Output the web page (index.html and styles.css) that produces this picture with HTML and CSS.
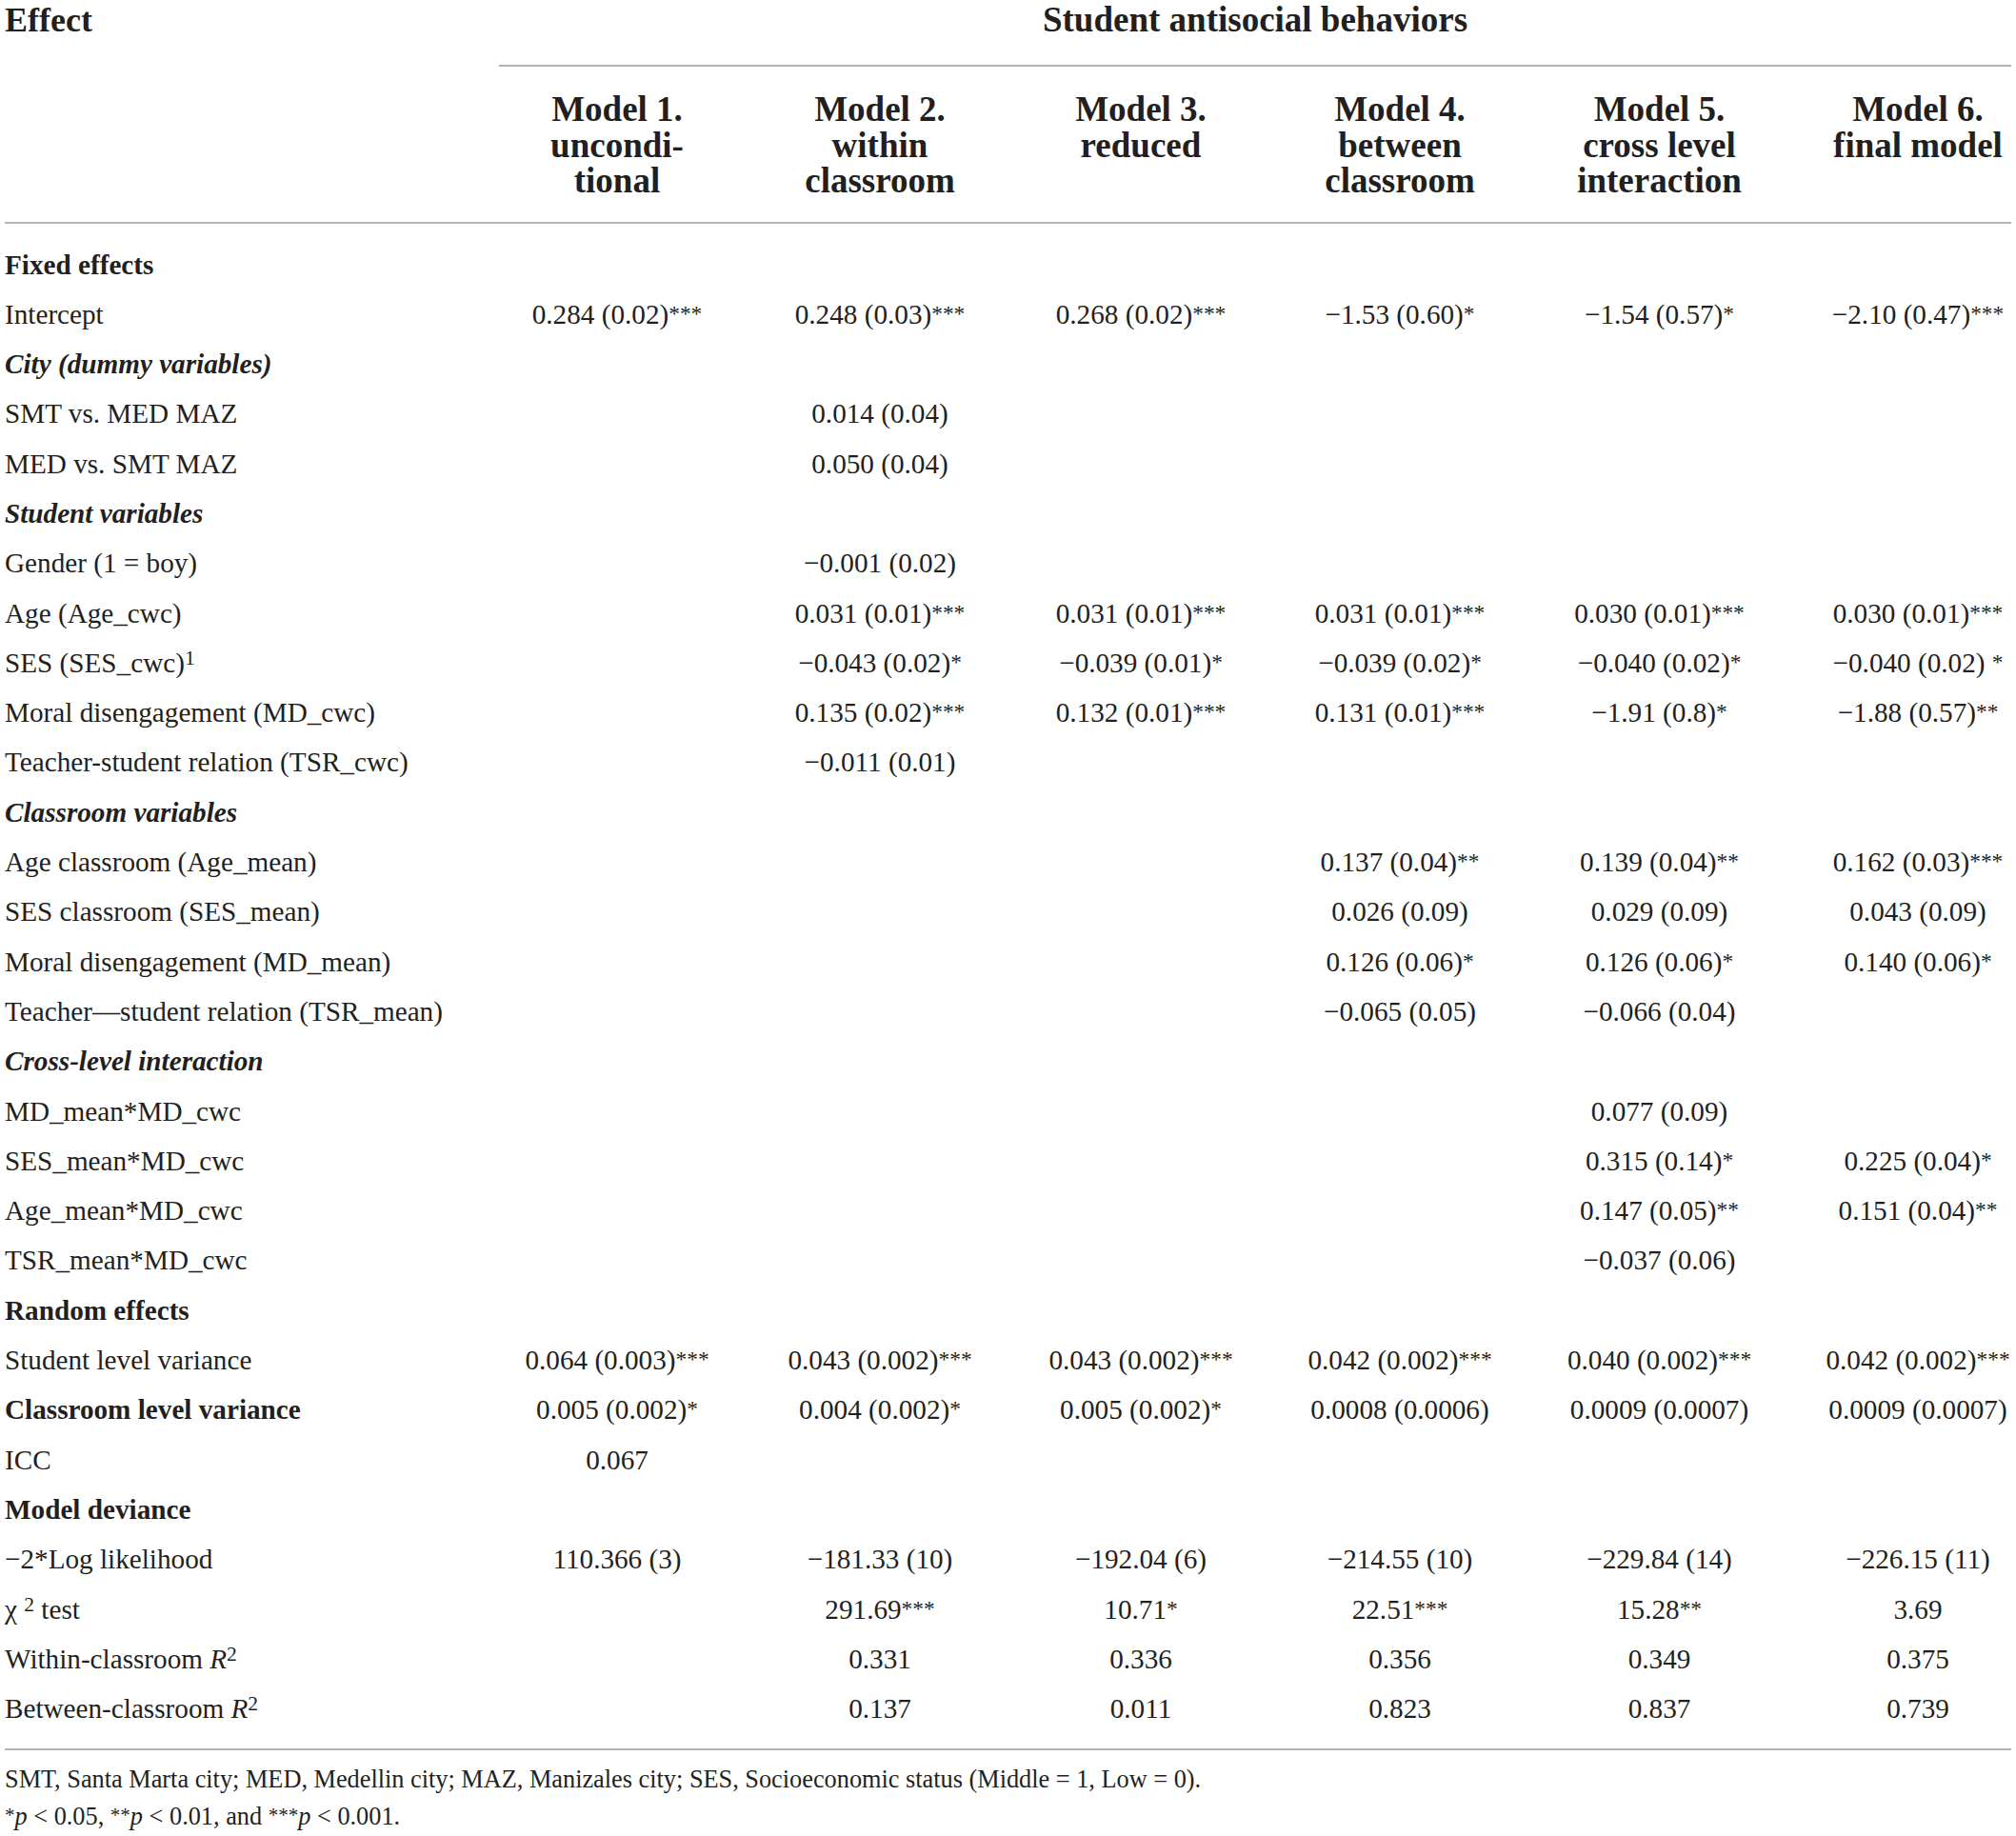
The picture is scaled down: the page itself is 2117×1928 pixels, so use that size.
FILE: index.html
```html
<!DOCTYPE html>
<html lang="en">

<head>
    <meta charset="UTF-8">
    <title>Student antisocial behaviors – multilevel models</title>
    <link rel="stylesheet" href="styles.css">
</head>

<body>
    <div class="page">
        <table class="models">
            <colgroup>
                <col class="col-label">
                <col class="col-m1">
                <col class="col-m2">
                <col class="col-m3">
                <col class="col-m4">
                <col class="col-m5">
                <col class="col-last">
            </colgroup>
            <thead>
                <tr class="head-top">
                    <th class="effect">Effect</th>
                    <th colspan="6" class="span-head">
                        <div class="span-title">Student antisocial behaviors</div>
                    </th>
                </tr>
                <tr class="head-models">
                    <th></th>
                    <th>Model 1.<br>uncondi-<br>tional</th>
                    <th>Model 2.<br>within<br>classroom</th>
                    <th>Model 3.<br>reduced</th>
                    <th>Model 4.<br>between<br>classroom</th>
                    <th>Model 5.<br>cross level<br>interaction</th>
                    <th class="last">Model 6.<br>final model</th>
                </tr>
            </thead>
            <tbody>
                <tr class="first">
                    <td class="group">Fixed effects</td>
                    <td></td><td></td><td></td><td></td><td></td><td class="last"></td>
                </tr>
                <tr>
                    <td>Intercept</td>
                    <td>0.284 (0.02)<span class="sig">***</span></td>
                    <td>0.248 (0.03)<span class="sig">***</span></td>
                    <td>0.268 (0.02)<span class="sig">***</span></td>
                    <td>&minus;1.53 (0.60)<span class="sig">*</span></td>
                    <td>&minus;1.54 (0.57)<span class="sig">*</span></td>
                    <td class="last">&minus;2.10 (0.47)<span class="sig">***</span></td>
                </tr>
                <tr>
                    <td class="group italic">City (dummy variables)</td>
                    <td></td><td></td><td></td><td></td><td></td><td class="last"></td>
                </tr>
                <tr>
                    <td>SMT vs. MED MAZ</td>
                    <td></td>
                    <td>0.014 (0.04)</td>
                    <td></td><td></td><td></td><td class="last"></td>
                </tr>
                <tr>
                    <td>MED vs. SMT MAZ</td>
                    <td></td>
                    <td>0.050 (0.04)</td>
                    <td></td><td></td><td></td><td class="last"></td>
                </tr>
                <tr>
                    <td class="group italic">Student variables</td>
                    <td></td><td></td><td></td><td></td><td></td><td class="last"></td>
                </tr>
                <tr>
                    <td>Gender (1 = boy)</td>
                    <td></td>
                    <td>&minus;0.001 (0.02)</td>
                    <td></td><td></td><td></td><td class="last"></td>
                </tr>
                <tr>
                    <td>Age (Age_cwc)</td>
                    <td></td>
                    <td>0.031 (0.01)<span class="sig">***</span></td>
                    <td>0.031 (0.01)<span class="sig">***</span></td>
                    <td>0.031 (0.01)<span class="sig">***</span></td>
                    <td>0.030 (0.01)<span class="sig">***</span></td>
                    <td class="last">0.030 (0.01)<span class="sig">***</span></td>
                </tr>
                <tr>
                    <td>SES (SES_cwc)<sup>1</sup></td>
                    <td></td>
                    <td>&minus;0.043 (0.02)<span class="sig">*</span></td>
                    <td>&minus;0.039 (0.01)<span class="sig">*</span></td>
                    <td>&minus;0.039 (0.02)<span class="sig">*</span></td>
                    <td>&minus;0.040 (0.02)<span class="sig">*</span></td>
                    <td class="last">&minus;0.040 (0.02) <span class="sig">*</span></td>
                </tr>
                <tr>
                    <td>Moral disengagement (MD_cwc)</td>
                    <td></td>
                    <td>0.135 (0.02)<span class="sig">***</span></td>
                    <td>0.132 (0.01)<span class="sig">***</span></td>
                    <td>0.131 (0.01)<span class="sig">***</span></td>
                    <td>&minus;1.91 (0.8)<span class="sig">*</span></td>
                    <td class="last">&minus;1.88 (0.57)<span class="sig">**</span></td>
                </tr>
                <tr>
                    <td>Teacher-student relation (TSR_cwc)</td>
                    <td></td>
                    <td>&minus;0.011 (0.01)</td>
                    <td></td><td></td><td></td><td class="last"></td>
                </tr>
                <tr>
                    <td class="group italic">Classroom variables</td>
                    <td></td><td></td><td></td><td></td><td></td><td class="last"></td>
                </tr>
                <tr>
                    <td>Age classroom (Age_mean)</td>
                    <td></td><td></td><td></td>
                    <td>0.137 (0.04)<span class="sig">**</span></td>
                    <td>0.139 (0.04)<span class="sig">**</span></td>
                    <td class="last">0.162 (0.03)<span class="sig">***</span></td>
                </tr>
                <tr>
                    <td>SES classroom (SES_mean)</td>
                    <td></td><td></td><td></td>
                    <td>0.026 (0.09)</td>
                    <td>0.029 (0.09)</td>
                    <td class="last">0.043 (0.09)</td>
                </tr>
                <tr>
                    <td>Moral disengagement (MD_mean)</td>
                    <td></td><td></td><td></td>
                    <td>0.126 (0.06)<span class="sig">*</span></td>
                    <td>0.126 (0.06)<span class="sig">*</span></td>
                    <td class="last">0.140 (0.06)<span class="sig">*</span></td>
                </tr>
                <tr>
                    <td>Teacher&mdash;student relation (TSR_mean)</td>
                    <td></td><td></td><td></td>
                    <td>&minus;0.065 (0.05)</td>
                    <td>&minus;0.066 (0.04)</td>
                    <td class="last"></td>
                </tr>
                <tr>
                    <td class="group italic">Cross-level interaction</td>
                    <td></td><td></td><td></td><td></td><td></td><td class="last"></td>
                </tr>
                <tr>
                    <td>MD_mean<span class="star">*</span>MD_cwc</td>
                    <td></td><td></td><td></td><td></td>
                    <td>0.077 (0.09)</td>
                    <td class="last"></td>
                </tr>
                <tr>
                    <td>SES_mean<span class="star">*</span>MD_cwc</td>
                    <td></td><td></td><td></td><td></td>
                    <td>0.315 (0.14)<span class="sig">*</span></td>
                    <td class="last">0.225 (0.04)<span class="sig">*</span></td>
                </tr>
                <tr>
                    <td>Age_mean<span class="star">*</span>MD_cwc</td>
                    <td></td><td></td><td></td><td></td>
                    <td>0.147 (0.05)<span class="sig">**</span></td>
                    <td class="last">0.151 (0.04)<span class="sig">**</span></td>
                </tr>
                <tr>
                    <td>TSR_mean<span class="star">*</span>MD_cwc</td>
                    <td></td><td></td><td></td><td></td>
                    <td>&minus;0.037 (0.06)</td>
                    <td class="last"></td>
                </tr>
                <tr>
                    <td class="group">Random effects</td>
                    <td></td><td></td><td></td><td></td><td></td><td class="last"></td>
                </tr>
                <tr>
                    <td>Student level variance</td>
                    <td>0.064 (0.003)<span class="sig">***</span></td>
                    <td>0.043 (0.002)<span class="sig">***</span></td>
                    <td>0.043 (0.002)<span class="sig">***</span></td>
                    <td>0.042 (0.002)<span class="sig">***</span></td>
                    <td>0.040 (0.002)<span class="sig">***</span></td>
                    <td class="last">0.042 (0.002)<span class="sig">***</span></td>
                </tr>
                <tr>
                    <td class="group">Classroom level variance</td>
                    <td>0.005 (0.002)<span class="sig">*</span></td>
                    <td>0.004 (0.002)<span class="sig">*</span></td>
                    <td>0.005 (0.002)<span class="sig">*</span></td>
                    <td>0.0008 (0.0006)</td>
                    <td>0.0009 (0.0007)</td>
                    <td class="last">0.0009 (0.0007)</td>
                </tr>
                <tr>
                    <td>ICC</td>
                    <td>0.067</td>
                    <td></td><td></td><td></td><td></td><td class="last"></td>
                </tr>
                <tr>
                    <td class="group">Model deviance</td>
                    <td></td><td></td><td></td><td></td><td></td><td class="last"></td>
                </tr>
                <tr>
                    <td>&minus;2<span class="star">*</span>Log likelihood</td>
                    <td>110.366 (3)</td>
                    <td>&minus;181.33 (10)</td>
                    <td>&minus;192.04 (6)</td>
                    <td>&minus;214.55 (10)</td>
                    <td>&minus;229.84 (14)</td>
                    <td class="last">&minus;226.15 (11)</td>
                </tr>
                <tr>
                    <td>&chi; <sup>2</sup> test</td>
                    <td></td>
                    <td>291.69<span class="sig">***</span></td>
                    <td>10.71<span class="sig">*</span></td>
                    <td>22.51<span class="sig">***</span></td>
                    <td>15.28<span class="sig">**</span></td>
                    <td class="last">3.69</td>
                </tr>
                <tr>
                    <td>Within-classroom <i>R</i><sup>2</sup></td>
                    <td></td>
                    <td>0.331</td>
                    <td>0.336</td>
                    <td>0.356</td>
                    <td>0.349</td>
                    <td class="last">0.375</td>
                </tr>
                <tr class="final">
                    <td>Between-classroom <i>R</i><sup>2</sup></td>
                    <td></td>
                    <td>0.137</td>
                    <td>0.011</td>
                    <td>0.823</td>
                    <td>0.837</td>
                    <td class="last">0.739</td>
                </tr>
            </tbody>
        </table>

        <div class="notes">
            <p>SMT, Santa Marta city; MED, Medellin city; MAZ, Manizales city; SES, Socioeconomic status (Middle = 1, Low = 0).</p>
            <p><span class="sig">*</span><i>p</i> &lt; 0.05, <span class="sig">**</span><i>p</i> &lt; 0.01, and <span class="sig">***</span><i>p</i> &lt; 0.001.</p>
        </div>
    </div>
</body>

</html>
```

FILE: styles.css
```css
body {
    margin: 0;
    background-color: #fff;
    color: #231f20;
    font-family: "Liberation Serif", "Times New Roman", serif;
}

.page {
    padding: 0 5px;
}

.models {
    width: 2107px;
    table-layout: fixed;
    border-collapse: separate;
    border-spacing: 0;
}

.col-label {
    width: 505px;
}

.col-m1,
.col-m2 {
    width: 276px;
}

.col-m3,
.col-m4 {
    width: 272px;
}

.col-m5 {
    width: 273px;
}

.col-last {
    width: 233px;
}

th,
td {
    padding: 0;
}

/* header */

thead th {
    font-size: 37px;
    font-weight: bold;
    text-align: center;
    vertical-align: top;
    white-space: nowrap;
}

.head-top th {
    line-height: 40px;
    padding-top: 1px;
}

.head-top .effect {
    font-size: 36px;
    text-align: left;
}

.span-title {
    margin-left: 14px;
    padding-bottom: 27px;
    border-bottom: 2px solid #b4b4b4;
}

.head-models th {
    line-height: 37.5px;
    padding-top: 26px;
    padding-bottom: 24px;
    border-bottom: 2px solid #b4b4b4;
}

.models .last {
    padding-left: 37px;
}

/* body */

tbody td {
    font-size: 29.2px;
    line-height: 52.3px;
    text-align: center;
    vertical-align: baseline;
    white-space: nowrap;
}

tbody td:first-child {
    text-align: left;
}

tbody tr.first td {
    padding-top: 17px;
}

tbody tr.final td {
    padding-bottom: 16px;
    border-bottom: 2px solid #b4b4b4;
}

.group {
    font-weight: bold;
}

.italic {
    font-style: italic;
}

.sig {
    font-size: 0.8em;
    line-height: 0;
    vertical-align: 0.12em;
}

.star {
    line-height: 0;
}

sup {
    font-size: 0.74em;
    line-height: 0;
    vertical-align: 0.36em;
}

/* notes */

.notes {
    padding-top: 11px;
    font-size: 26.3px;
    line-height: 39px;
}

.notes p {
    margin: 0;
}
```
